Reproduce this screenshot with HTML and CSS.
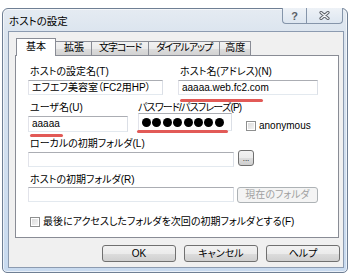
FILE: index.html
```html
<!DOCTYPE html>
<html lang="ja">
<head>
    <meta charset="UTF-8">
    <meta name="viewport" content="width=device-width, initial-scale=1.0">
    <title>ホストの設定</title>
    <link rel="stylesheet" href="styles.css">
</head>
<body>
    <div class="window">
        <div class="titlebar">
            <span class="title">ホストの設定</span>
            <div class="caption">
                <span class="cap cap-help">?</span>
                <span class="cap cap-close">
                    <svg width="11" height="9" viewBox="0 0 11 9">
                        <path d="M2 1.5 L9 7.5 M9 1.5 L2 7.5" stroke="#5b5f66" stroke-width="3.2" stroke-linecap="round"/>
                        <path d="M2 1.5 L9 7.5 M9 1.5 L2 7.5" stroke="#f3f5f8" stroke-width="1.3" stroke-linecap="round"/>
                    </svg>
                </span>
            </div>
        </div>

        <div class="client">
            <div class="tabs">
                <span class="tab active">基本</span>
                <span class="tab">拡張</span>
                <span class="tab tab-narrow">文字コード</span>
                <span class="tab tab-narrow">ダイアルアップ</span>
                <span class="tab tab-short">高度</span>
            </div>

            <div class="panel">
                <div class="row row-1">
                    <div class="field f-name">
                        <label>ホストの設定名(T)</label>
                        <div class="input">エフエフ美容室（FC2用HP）</div>
                    </div>
                    <div class="field f-host">
                        <label>ホスト名(アドレス)(N)</label>
                        <div class="input">aaaaa.web.fc2.com</div>
                        <span class="mark mark-host"></span>
                    </div>
                </div>

                <div class="row row-2">
                    <div class="field f-user">
                        <label>ユーザ名(U)</label>
                        <div class="input">aaaaa</div>
                        <span class="mark mark-user"></span>
                    </div>
                    <div class="field f-pass">
                        <label>パスワード/パスフレーズ(P)</label>
                        <div class="input input-pass">
                            <span class="dot"></span><span class="dot"></span><span class="dot"></span><span class="dot"></span><span class="dot"></span><span class="dot"></span><span class="dot"></span><span class="dot"></span>
                        </div>
                        <span class="mark mark-pass"></span>
                    </div>
                    <div class="check check-anon">
                        <span class="box"></span>
                        <span>anonymous</span>
                    </div>
                </div>

                <div class="row row-3">
                    <div class="field">
                        <label>ローカルの初期フォルダ(L)</label>
                        <div class="with-btn">
                            <div class="input input-wide"></div>
                            <span class="btn btn-browse">...</span>
                        </div>
                    </div>
                </div>

                <div class="row row-4">
                    <div class="field">
                        <label>ホストの初期フォルダ(R)</label>
                        <div class="with-btn">
                            <div class="input input-wide"></div>
                            <span class="btn btn-current">現在のフォルダ</span>
                        </div>
                    </div>
                </div>

                <div class="check check-last">
                    <span class="box"></span>
                    <span>最後にアクセスしたフォルダを次回の初期フォルダとする(F)</span>
                </div>
            </div>

            <div class="actions">
                <span class="btn btn-action">OK</span>
                <span class="btn btn-action">キャンセル</span>
                <span class="btn btn-action">ヘルプ</span>
            </div>
        </div>
    </div>
</body>
</html>
```

FILE: styles.css
```css
* {
    box-sizing: border-box;
}
body {
    margin: 0;
    background-color: #fff;
    font-family: "Liberation Sans", "Noto Sans CJK JP", sans-serif;
    font-size: 10px;
    line-height: 12px;
    color: #000;
    font-feature-settings: "palt";
}
.window {
    width: 346px;
    height: 265px;
    margin: 8px 0 0 2px;
    padding: 0 3px 4px 5px;
    border: 1px solid #6f7f94;
    border-radius: 6px 6px 5px 5px;
    background: linear-gradient(#e5ebf2, #dce5ef 22px, #c8daef);
    box-shadow: inset 0 0 0 1px rgba(255,255,255,0.6);
    display: flex;
    flex-direction: column;
}
.titlebar {
    height: 22px;
    display: flex;
    align-items: flex-start;
}
.title {
    padding: 6px 0 0 1px;
    font-size: 10.5px;
}
.caption {
    display: flex;
    margin: -1px 1px 0 auto;
}
.cap {
    height: 16px;
    display: flex;
    justify-content: center;
    align-items: center;
    border: 1px solid #8595aa;
    border-top: none;
    background: linear-gradient(#eef2f7, #dde6f0);
}
.cap-help {
    width: 24px;
    border-radius: 0 0 0 4px;
    border-right: none;
    font-weight: bold;
    font-size: 11px;
    color: #5b5f66;
}
.cap-close {
    width: 37px;
    border-radius: 0 0 4px 0;
}
.client {
    flex: 1;
    border: 1px solid #8c9bb0;
    background-color: #f0f0f0;
    padding: 6px 4px 0 6px;
    display: flex;
    flex-direction: column;
}
.tabs {
    display: flex;
    align-items: flex-end;
    height: 17px;
    padding-left: 1px;
}
.tab {
    height: 14px;
    padding: 0 7px 0 8px;
    margin-right: -1px;
    border: 1px solid #898c95;
    border-bottom: none;
    background: linear-gradient(#f2f2f2, #ebebeb 50%, #dddddd 50%, #d3d3d3);
    line-height: 12px;
    white-space: nowrap;
}
.tab-narrow {
    letter-spacing: -1px;
    padding: 0 7px;
}
.tab-short {
    padding: 0 5px;
}
.tab.active {
    position: relative;
    z-index: 1;
    height: 18px;
    margin-bottom: -1px;
    padding: 2px 9px 0;
    background: #fff;
}
.panel {
    height: 183px;
    border: 1px solid #898c95;
    background-color: #fff;
    padding: 10px 0 0 12px;
}
.row {
    display: flex;
}
.row-1 {
    gap: 15px;
}
.row-2 {
    gap: 10px;
    margin-top: 7px;
    align-items: flex-start;
}
.row-3 {
    margin-top: 6px;
}
.row-4 {
    margin-top: 7px;
}
.field {
    position: relative;
    display: flex;
    flex-direction: column;
    flex: none;
}
.field label {
    padding-left: 2px;
    white-space: nowrap;
}
.input {
    height: 15px;
    margin-top: 2px;
    padding: 0 3px;
    border: 1px solid;
    border-color: #abadb3 #dbdfe6 #e3e9ef #e2e3ea;
    background-color: #fff;
    line-height: 13px;
    white-space: nowrap;
    overflow: hidden;
}
.f-name .input {
    width: 135px;
}
.f-host .input {
    width: 140px;
}
.f-user .input {
    width: 100px;
    height: 16px;
    line-height: 14px;
}
.f-pass {
    width: 94px;
    min-width: 0;
}
.f-pass label {
    padding-left: 0;
    letter-spacing: -0.8px;
}
.input-pass {
    width: 94px;
    height: 18px;
    margin-top: -1px;
    padding: 0 0 0 3px;
    display: flex;
    align-items: center;
    gap: 1.4px;
}
.dot {
    width: 9px;
    height: 9px;
    border-radius: 50%;
    background-color: #000;
    flex: none;
}
.input-wide {
    width: 206px;
}
.with-btn {
    display: flex;
    align-items: flex-start;
}
.row-4 .input {
    margin-top: 1px;
}
.mark {
    position: absolute;
    height: 3px;
    border-radius: 2px;
    background-color: #e25a57;
}
.mark-host {
    left: 2px;
    top: 33px;
    width: 83px;
}
.mark-user {
    left: 2px;
    top: 32px;
    width: 33px;
}
.mark-pass {
    left: -1px;
    top: 28px;
    width: 91px;
}
.check {
    display: flex;
    align-items: center;
    gap: 3px;
    white-space: nowrap;
}
.box {
    width: 10px;
    height: 10px;
    border: 1px solid #8e8f8f;
    background: linear-gradient(135deg, #d8d8d8, #f7f7f7);
    box-shadow: inset 0 0 0 1px #fff;
}
.check-anon {
    margin: 18px 0 0 4px;
}
.check-last {
    margin: 13px 0 0 2px;
}
.btn {
    display: flex;
    justify-content: center;
    align-items: center;
    border: 1px solid #707070;
    border-radius: 3px;
    background: linear-gradient(#f2f2f2, #ebebeb 50%, #dddddd 50%, #cfcfcf);
    white-space: nowrap;
}
.btn-browse {
    width: 16px;
    height: 16px;
    margin-left: 4px;
    font-size: 8px;
    line-height: 8px;
    padding-top: 2px;
}
.btn-current {
    width: 81px;
    height: 16px;
    margin: 1px 0 0 3px;
    border-color: #adb2b5;
    background: #f4f4f4;
    color: #a0a0a0;
}
.actions {
    display: flex;
    justify-content: flex-end;
    gap: 8px;
    margin: 7px -1px 0 0;
}
.btn-action {
    width: 74px;
    height: 17px;
}
```
